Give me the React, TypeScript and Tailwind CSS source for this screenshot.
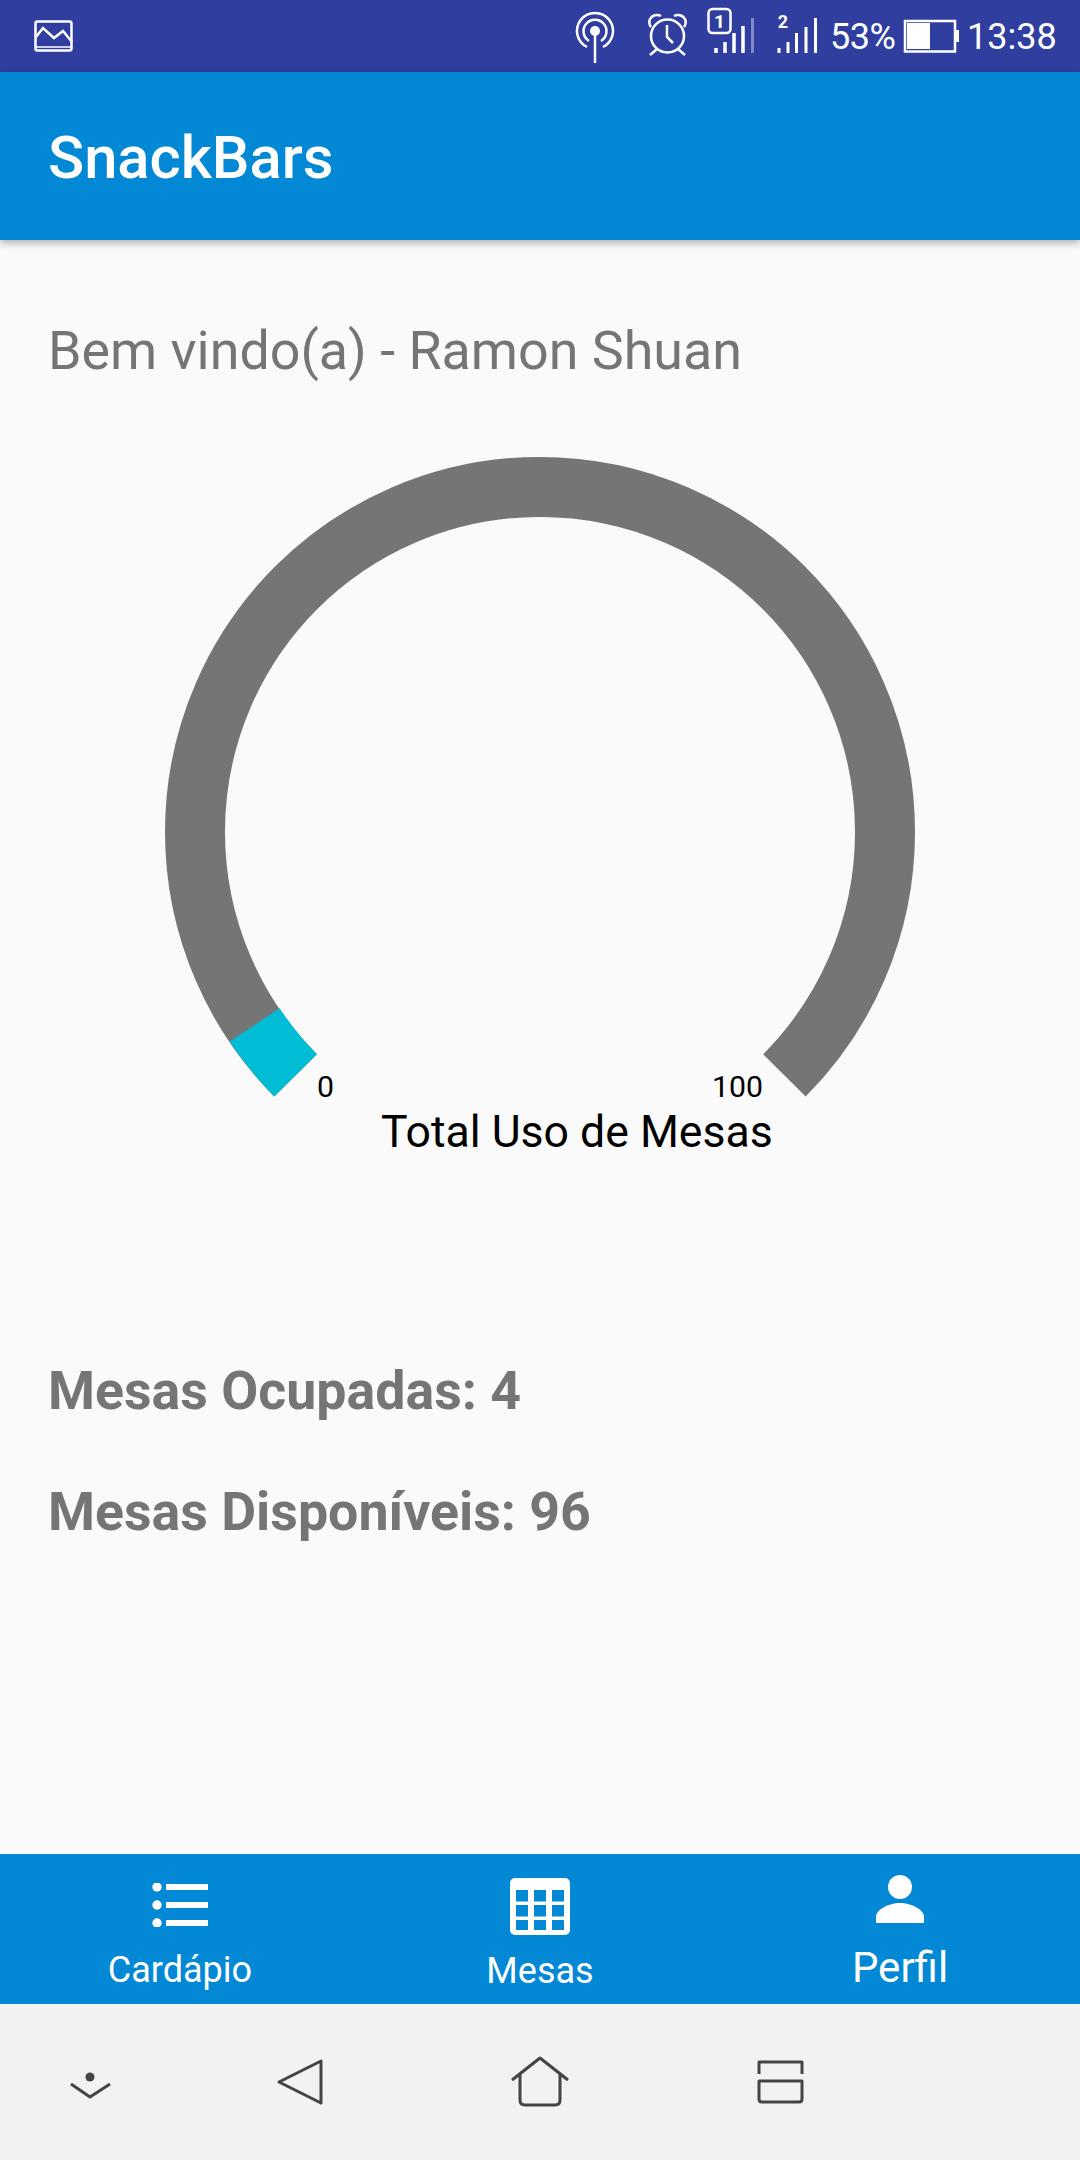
const font = { fontFamily: 'Roboto, sans-serif' };

function StatusIcons() {
  return (
    <svg width="480" height="72" viewBox="540 0 480 72" fill="none" stroke="#fff" strokeWidth="2.5" className="shrink-0">
      <circle cx="595" cy="31" r="5" strokeWidth="0" fill="#fff" />
      <path d="M595 31V63" />
      <path d="M589 41A11.5 11.5 0 1 1 601 41" />
      <path d="M587 47A18 18 0 1 1 603 47" />
      <circle cx="667.5" cy="36" r="16.5" />
      <path d="M667 25v12l6 6" />
      <path d="M651 27a8 8 0 0 1 -1 -8a8 8 0 0 1 11 -3M684 27a8 8 0 0 0 1 -8a8 8 0 0 0 -11 -3M657 49l-7 6M678 49l7 6" />
      <rect x="708.5" y="9" width="22" height="24" rx="4" />
      <text x="719.5" y="28" textAnchor="middle" fontSize="19" fontWeight="700" fill="#fff" stroke="none">1</text>
      <path d="M716 53v-5M725 53v-11M734 53v-20M743 53v-27" strokeWidth="3.5" />
      <path d="M752.5 53v-35" strokeWidth="3" stroke="#7f88c9" />
      <text x="783" y="28" textAnchor="middle" fontSize="18" fontWeight="700" fill="#fff" stroke="none">2</text>
      <path d="M779 53v-5M788 53v-11M796.5 53v-20M806 53v-26M815.5 53v-35" strokeWidth="3" />
      <rect x="905" y="21" width="50" height="30.5" />
      <rect x="907" y="23" width="23" height="26" fill="#fff" strokeWidth="0" />
      <rect x="955" y="30" width="4" height="12" fill="#fff" strokeWidth="0" />
    </svg>
  );
}

function Gauge() {
  return (
    <svg width="750" height="660" viewBox="165 456 750 660" className="block" fill="none" strokeWidth="60">
      <path d="M295.6 1075.4A345 345 0 1 1 784.4 1075.4" stroke="#757575" />
      <path d="M295.6 1075.4A345 345 0 0 1 254.6 1025" stroke="#00bcd4" />
    </svg>
  );
}

function NavIcon({ kind }: { kind: 'list' | 'grid' | 'person' }) {
  if (kind === 'list') {
    return (
      <svg width="56" height="44" viewBox="0 0 56 44" fill="#fff">
        <circle cx="5" cy="4" r="4.7" />
        <circle cx="5" cy="22" r="4.7" />
        <circle cx="5" cy="40" r="4.7" />
        <rect x="14" y="1" width="42" height="6" />
        <rect x="14" y="19" width="42" height="6" />
        <rect x="14" y="37" width="42" height="6" />
      </svg>
    );
  }
  if (kind === 'grid') {
    return (
      <svg width="60" height="58" viewBox="0 0 60 58" fill="#fff">
        <path
          fillRule="evenodd"
          d="M5 0h50a5 5 0 0 1 5 5v47a5 5 0 0 1-5 5H5a5 5 0 0 1-5-5V5a5 5 0 0 1 5-5ZM6 12v11.5h12v-11.5ZM24 12v11.5h12v-11.5ZM42 12v11.5h12v-11.5ZM6 27v11.5h12v-11.5ZM24 27v11.5h12v-11.5ZM42 27v11.5h12v-11.5ZM6 42v10h12v-10ZM24 42v10h12v-10ZM42 42v10h12v-10Z"
        />
      </svg>
    );
  }
  return (
    <svg width="48" height="48" viewBox="0 0 48 48" fill="#fff">
      <circle cx="24" cy="12" r="12" />
      <path d="M0 48V42C0 34 14 28 24 28S48 34 48 42V48Z" />
    </svg>
  );
}

export default function App() {
  return (
    <div className="flex h-[2160px] w-[1080px] flex-col overflow-hidden bg-[#fafafa]" style={font}>
      <div className="flex h-[72px] shrink-0 items-center bg-[#303f9f] text-white">
        <svg width="40" height="32" viewBox="0 0 40 32" fill="none" stroke="#fff" strokeWidth="2.5" className="ml-[34px]">
          <rect x="1.5" y="1.5" width="36" height="29" rx="2" />
          <path d="M2 17L9 8L20 18L29 11L38 22" />
          <path d="M2 27H38" strokeWidth="1.5" />
        </svg>
        <div className="relative ml-[466px] h-[72px] flex-1">
          <StatusIcons />
          <span className="absolute left-[290px] top-[17px] text-[36px] leading-[40px] tracking-[-0.5px]">53%</span>
          <span className="absolute left-[427px] top-[17px] text-[36px] leading-[40px]">13:38</span>
        </div>
      </div>

      <header className="z-10 flex h-[168px] shrink-0 items-center bg-[#0288d4] pl-[48px] pt-[3px] shadow-[0_3px_8px_rgba(0,0,0,0.3)]">
        <h1 className="text-[59.7px] font-medium leading-[70px] text-white">SnackBars</h1>
      </header>

      <main className="flex-1 px-[48px] pt-[78px]">
        <p className="text-[53.8px] leading-[66px] text-[#757575]">Bem vindo(a) - Ramon Shuan</p>
        <div className="relative ml-[117px] mt-[72px] h-[700px] w-[750px]">
          <Gauge />
          <span className="absolute left-[152px] top-[613px] text-[30.25px] leading-[36px] text-black">0</span>
          <span className="absolute left-[547px] top-[613px] text-[30.25px] leading-[36px] text-black">100</span>
          <span className="absolute left-[216px] top-[650px] text-[44.6px] leading-[52px] text-black">Total Uso de Mesas</span>
        </div>
        <p className="mt-[205px] text-[53.7px] font-bold leading-[60px] text-[#757575]">Mesas Ocupadas: 4</p>
        <p className="mt-[61px] text-[53.7px] font-bold leading-[60px] text-[#757575]">Mesas Disponíveis: 96</p>
      </main>

      <nav className="grid h-[150px] shrink-0 grid-cols-3 bg-[#0288d4] text-white">
        <div className="flex flex-col items-center pt-[29px]">
          <NavIcon kind="list" />
          <span className="mt-[23px] text-[36px] leading-[40px]">Cardápio</span>
        </div>
        <div className="flex flex-col items-center pt-[24px]">
          <NavIcon kind="grid" />
          <span className="mt-[15px] text-[36px] leading-[40px]">Mesas</span>
        </div>
        <div className="flex flex-col items-center pt-[21px]">
          <NavIcon kind="person" />
          <span className="mt-[22px] text-[42px] leading-[46px]">Perfil</span>
        </div>
      </nav>

      <div className="h-[156px] shrink-0 bg-[#f2f2f2]">
        <svg width="1080" height="156" viewBox="0 2004 1080 156" fill="none" stroke="#444444" strokeWidth="3" strokeLinejoin="round">
          <circle cx="90" cy="2077" r="4.5" fill="#444444" strokeWidth="0" />
          <path d="M71 2084L90 2097L110 2084" />
          <path d="M321 2061L279 2082L321 2103Z" />
          <path d="M512 2080L540 2058L568 2080M520 2073V2100Q520 2105 525 2105H555Q560 2105 560 2100V2073" />
          <path d="M759 2074V2062H802V2074M759 2081H802V2099Q802 2102 799 2102H762Q759 2102 759 2099Z" />
        </svg>
      </div>
    </div>
  );
}
